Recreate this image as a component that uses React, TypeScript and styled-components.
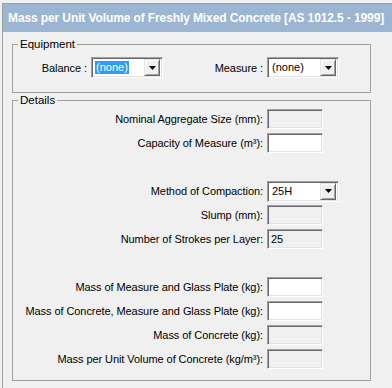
import React from 'react'
import styled, { createGlobalStyle, css } from 'styled-components'

const GlobalStyle = createGlobalStyle`
  html, body {
    margin: 0;
    background: #f0f0f0;
  }
  body {
    font-family: 'Liberation Sans', Arial, sans-serif;
    font-size: 11px;
    color: #000;
  }
`

const Page = styled.div`
  width: 392px;
  height: 388px;
  overflow: hidden;
  padding: 3px 0 0 2px;
  box-sizing: border-box;
`

const Frame = styled.div`
  width: 430px;
  height: 400px;
  border-top: 1px solid #a0a0a0;
  border-left: 1px solid #a0a0a0;
  box-sizing: border-box;
`

const TitleBar = styled.div`
  height: 28px;
  line-height: 28px;
  padding-left: 5px;
  background: #9cb5d2;
  color: #fff;
  font-weight: bold;
  font-size: 12px;
  letter-spacing: -0.11px;
  white-space: nowrap;
`

const Body = styled.div`
  padding: 6px 0 0 9px;
`

const GroupBox = styled.fieldset<{ $height: number; $top?: number }>`
  box-sizing: border-box;
  width: 359px;
  height: ${(p) => p.$height}px;
  margin: ${(p) => p.$top ?? 0}px 0 0 0;
  padding: 0;
  border: 1px solid #a0a0a0;
  min-inline-size: auto;
`

const Legend = styled.legend`
  margin-left: 5px;
  padding: 0 2px;
  font-size: 11.5px;
  line-height: 13px;
`

const EquipmentRow = styled.div`
  display: grid;
  grid-template-columns: 74px 72px 96px 72px;
  column-gap: 4px;
  align-items: center;
  padding-top: 6px;
`

const DetailsGrid = styled.div`
  display: grid;
  grid-template-columns: 250px max-content;
  grid-auto-rows: 20px;
  column-gap: 4px;
  row-gap: 4px;
  align-items: center;
  padding-top: 2px;
`

const Label = styled.div`
  text-align: right;
  white-space: nowrap;
  font-size: 11px;
  letter-spacing: -0.07px;
`

const Spacer = styled.div`
  grid-column: 1 / span 2;
`

const sunken = css`
  box-sizing: border-box;
  border: 1px solid;
  border-color: #a0a0a0 #fff #fff #a0a0a0;
  box-shadow: inset 1px 1px 0 #696969, inset -1px -1px 0 #e3e3e3;
`

const TextBox = styled.div<{ $readOnly?: boolean }>`
  ${sunken};
  width: 56px;
  height: 20px;
  padding: 3px 0 0 3px;
  line-height: 13px;
  background: ${(p) => (p.$readOnly ? '#f0f0f0' : '#fff')};
`

const Combo = styled.div`
  ${sunken};
  display: flex;
  align-items: center;
  width: 72px;
  height: 21px;
  padding: 2px;
  background: #fff;
`

const ComboText = styled.span<{ $selected?: boolean }>`
  flex: 1;
  padding-left: 1px;
  line-height: 13px;
  span {
    display: inline-block;
    padding: 0 1px;
    background: ${(p) => (p.$selected ? '#3399ff' : 'transparent')};
    color: ${(p) => (p.$selected ? '#fff' : '#000')};
  }
`

const DropButton = styled.div`
  box-sizing: border-box;
  width: 16px;
  height: 17px;
  display: flex;
  align-items: center;
  justify-content: center;
  background: #f0f0f0;
  border: 1px solid;
  border-color: #e3e3e3 #696969 #696969 #e3e3e3;
  box-shadow: inset 1px 1px 0 #fff, inset -1px -1px 0 #a0a0a0;
`

const Arrow = () => (
  <svg width="7" height="4" viewBox="0 0 7 4">
    <path d="M0 0h7L3.5 4z" fill="#000" />
  </svg>
)

function ComboBox({ value, selected }: { value: string; selected?: boolean }) {
  return (
    <Combo>
      <ComboText $selected={selected}>
        <span>{value}</span>
      </ComboText>
      <DropButton>
        <Arrow />
      </DropButton>
    </Combo>
  )
}

export default function App() {
  return (
    <Page>
      <GlobalStyle />
      <Frame>
        <TitleBar>Mass per Unit Volume of Freshly Mixed Concrete [AS 1012.5 - 1999]</TitleBar>
        <Body>
          <GroupBox $height={55}>
            <Legend>Equipment</Legend>
            <EquipmentRow>
              <Label>Balance :</Label>
              <ComboBox value="(none)" selected />
              <Label>Measure :</Label>
              <ComboBox value="(none)" />
            </EquipmentRow>
          </GroupBox>
          <GroupBox $height={287} $top={1}>
            <Legend>Details</Legend>
            <DetailsGrid>
              <Label>Nominal Aggregate Size (mm):</Label>
              <TextBox $readOnly />
              <Label>Capacity of Measure (m³):</Label>
              <TextBox />
              <Spacer />
              <Label>Method of Compaction:</Label>
              <ComboBox value="25H" />
              <Label>Slump (mm):</Label>
              <TextBox $readOnly />
              <Label>Number of Strokes per Layer:</Label>
              <TextBox $readOnly>25</TextBox>
              <Spacer />
              <Label>Mass of Measure and Glass Plate (kg):</Label>
              <TextBox />
              <Label>Mass of Concrete, Measure and Glass Plate (kg):</Label>
              <TextBox />
              <Label>Mass of Concrete (kg):</Label>
              <TextBox $readOnly />
              <Label>Mass per Unit Volume of Concrete (kg/m³):</Label>
              <TextBox $readOnly />
            </DetailsGrid>
          </GroupBox>
        </Body>
      </Frame>
    </Page>
  )
}
